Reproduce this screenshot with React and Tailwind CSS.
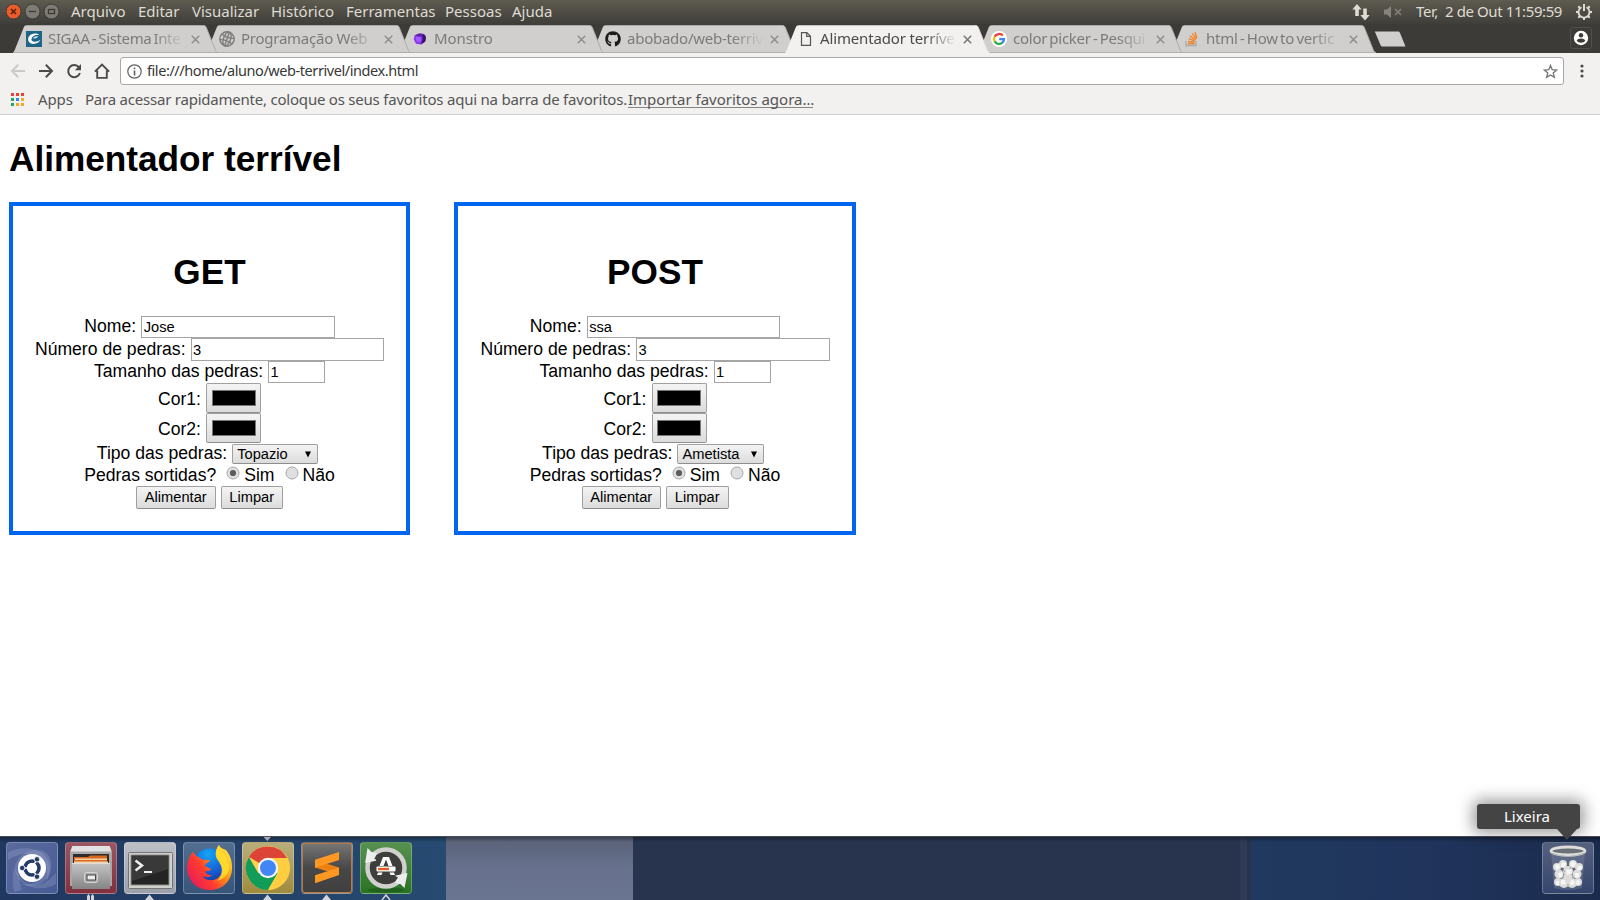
import React from "react";
import { FaGithub } from "react-icons/fa";

const menus = [
  ["Arquivo", "w-[55px]"],
  ["Editar", "w-[42px]"],
  ["Visualizar", "w-[67px]"],
  ["Histórico", "w-[63px]"],
  ["Ferramentas", "w-[87px]"],
  ["Pessoas", "w-[55px]"],
  ["Ajuda", "w-[40px]"],
];

const SigaaIcon = () => (
  <svg width="16" height="16" viewBox="0 0 16 16">
    <rect width="16" height="16" fill="#1f6587" />
    <path d="M13.500 4.200C11 1.600 5 2.200 2.800 5.800 .8 9.400 3.400 12.900 7.300 12.900c3.300 0 6.300-1.600 7.200-4.300-2 1.900-5 2.600-7 2C4.900 9.700 4.900 7.300 7 5.400 8.800 3.900 11.300 3.600 13.500 4.200z" fill="#fff" />
    <path d="M7.500 6.200c1.500-1.200 3.500-1.200 4.700-.7-.8 1.300-2.700 2.300-4.700 2.300z" fill="#b9dcec" />
  </svg>
);
const GlobeIcon = () => (
  <svg width="16" height="16" viewBox="0 0 16 16" fill="none" stroke="#7c7c7c" strokeWidth="1.400">
    <circle cx="8" cy="8" r="7.200" />
    <g transform="rotate(20 8 8)">
      <ellipse cx="8" cy="8" rx="3.500" ry="7.200" />
      <path d="M8 .8v14.400M1.500 5q6.500 2.600 13 0M1.500 11q6.500-2.600 13 0" />
    </g>
  </svg>
);
const MonsterIcon = () => (
  <svg width="16" height="16" viewBox="0 0 16 16">
    <path d="M2.500 4.500 7 2.500l5 .5 2 3-.8 4.500L9 13.500l-5-.8L1.800 8.500z" fill="#8a35ee" />
    <path d="m10 3 3 1 1 3-.8 3.500L9 13.500l1.500-5z" fill="#3a1360" />
    <path d="m2.500 4.500 4.500-2 5 .5-2.500 2.500z" fill="#5a20a0" />
    <path d="m3.500 6 5 .3.500 4-4 .7z" fill="#a35bff" />
  </svg>
);
const GithubIcon = () => <FaGithub size={16} color="#1b1b1b" />;
const PageIcon = () => (
  <svg width="16" height="16" viewBox="0 0 16 16" fill="none" stroke="#555" strokeWidth="1.200">
    <path d="M3.500 1.600h5.400l3.600 3.600v9.200h-9zM8.700 1.800v3.600h3.700" />
  </svg>
);
const GoogleIcon = () => (
  <svg width="16" height="16" viewBox="0 0 16 16">
    <circle cx="8" cy="8" r="8" fill="#fff" />
    <g fill="none" strokeWidth="2.300">
      <path d="M11.800 4.600A5 5 0 0 0 3.600 5.800" stroke="#ea4335" />
      <path d="M3.600 5.700a5 5 0 0 0 0 4.600" stroke="#fbbc05" />
      <path d="M3.600 10.200a5 5 0 0 0 7.700 1.500" stroke="#34a853" />
      <path d="M11.200 11.800A5 5 0 0 0 13 8.100H8.200" stroke="#4285f4" />
    </g>
  </svg>
);
const StackIcon = () => (
  <svg width="16" height="16" viewBox="0 0 16 16" fill="none" strokeWidth="1.300">
    <path d="M2 10v4.500h10V10" stroke="#a9a9ab" />
    <path d="M4 12.500h6.500M4 10.300l6.500.8M4.700 7.700l6.200 2.100M6 5.100l5.500 3.600M8.300 2.700l4 5.200M11 1l1.800 6" stroke="#f48024" />
  </svg>
);

const tabs = [
  { t: "SIGAA - Sistema Inte", Icon: SigaaIcon, k: "tracking-[-0.350px] [word-spacing:-1.500px]" },
  { t: "Programação Web", Icon: GlobeIcon, k: "tracking-[-0.250px]" },
  { t: "Monstro", Icon: MonsterIcon, k: "tracking-[-0.100px]" },
  { t: "abobado/web-terriv", Icon: GithubIcon, k: "tracking-[-0.250px]" },
  { t: "Alimentador terríve", Icon: PageIcon, k: "tracking-[-0.150px]", active: true },
  { t: "color picker - Pesqui", Icon: GoogleIcon, k: "tracking-[-0.250px] [word-spacing:-1.500px]" },
  { t: "html - How to vertic", Icon: StackIcon, k: "tracking-[-0.200px] [word-spacing:-1.500px]" },
];
const layers = ["z-[7]", "z-[6]", "z-[5]", "z-[4]", "z-[8]", "z-[2]", "z-[1]"];

function Tab({ t, Icon, k, active, layer }) {
  return (
    <div className={`relative -ml-3 h-7 w-[205px] shrink-0 ${layer}`}>
      <svg className="absolute inset-0" width="205" height="28" viewBox="0 0 205 28">
        <path d="M0 28 1.500 25.500 10.500 3C11.200 1 12 .3 14 .3h176c2 0 2.800.7 3.500 2.700l9 22.500L205 28z" fill={active ? "#f2f1f0" : "#d0cfcd"} />
        <path d="M190 .5c2 0 2.800.7 3.500 2.500l9 22.500 1.500 2" fill="none" stroke={active ? "#dddcdb" : "#aeadab"} />
        {!active && <path d="M0 27.500h205" stroke="#b0afad" />}
      </svg>
      <div className="relative flex h-7 items-center pl-[13px]">
        <Icon />
        <div className={`-mt-[2px] ml-[6px] w-[140px] whitespace-nowrap text-[15px] leading-[26px] [mask-image:linear-gradient(to_right,black_105px,transparent_137px)] ${k} ${active ? "text-[#4a4a4a]" : "text-[#7b7b7a]"}`}>{t}</div>
        <svg className="ml-[3px]" width="9" height="9" viewBox="0 0 9 9">
          <path d="m.8.8 7.400 7.400m0-7.400L.8 8.200" stroke={active ? "#777" : "#8f8e8d"} strokeWidth="1.500" />
        </svg>
      </div>
    </div>
  );
}

function TopBar() {
  return (
    <div className="flex h-6 items-center bg-linear-to-b from-[#5e5b50] to-[#3f3e39] pl-[6px] text-[15px] leading-[22px] text-[#dfdbd2]">
      <svg width="54" height="24" viewBox="0 0 54 24">
        <circle cx="7.500" cy="11.500" r="7.500" fill="#ec5b29" stroke="#3d3b36" />
        <path d="m5 9 5 5m0-5-5 5" stroke="#50200e" strokeWidth="1.500" />
        <circle cx="26.500" cy="11.500" r="7.500" fill="#7d7b74" stroke="#3d3b36" />
        <path d="M23 11.500h7" stroke="#3c3b37" strokeWidth="1.300" />
        <circle cx="45.500" cy="11.500" r="7.500" fill="#7d7b74" stroke="#3d3b36" />
        <rect x="42.500" y="9.500" width="6" height="4" fill="none" stroke="#3c3b37" strokeWidth="1.300" />
      </svg>
      <div className="-mt-[2px] ml-[11px] flex gap-3">
        {menus.map(([m, w]) => <div key={m} className={`whitespace-nowrap ${w}`}>{m}</div>)}
      </div>
      <svg className="ml-auto" width="18" height="18" viewBox="0 0 18 18" fill="#dfdbd2">
        <path d="M5 1 .3 6.500h2.900V13h3.600V6.500h2.900zM13 17.500 8.300 12h2.900V5.500h3.600V12h2.900z" />
      </svg>
      <svg className="ml-[14px]" width="18" height="14" viewBox="0 0 18 14">
        <path d="M0 4.500h3L7 1v12L3 9.500H0z" fill="#85837b" />
        <path d="m11 4 6 6m0-6-6 6" stroke="#85837b" strokeWidth="1.500" />
      </svg>
      <div className="-mt-[2px] ml-[14px] w-[147px] whitespace-pre tracking-[-0.400px]">Ter,  2 de Out 11:59:59</div>
      <svg className="mr-[7px] ml-3" width="18" height="18" viewBox="0 0 18 18" fill="none" stroke="#dfdbd2">
        <path d="M6.500 4.200a5.500 5.500 0 1 0 5 0" strokeWidth="1.800" />
        <path d="M9 1v7" strokeWidth="2" />
        <path d="M1 9h2.500M14.500 9H17M3.300 3.300 5 5M14.700 3.300 13 5M3.300 14.700 5 13M14.700 14.700 13 13M9 14.500V17" strokeWidth="2" />
      </svg>
    </div>
  );
}

function TabStrip() {
  return (
    <div className="flex h-[29px] items-end bg-[#3c3b37] pl-[25px]">
      <div className="isolate flex h-7">
        {tabs.map((t, i) => <Tab key={t.t} {...t} layer={layers[i]} />)}
      </div>
      <svg className="-ml-[2px] self-center" width="33" height="16" viewBox="0 0 33 16">
        <path d="M1 .5h23c1 0 1.500.3 2 1.500l5.500 13.500H9c-1.500 0-2-.3-2.500-1.500L1 1z" fill="#d0cfcd" />
      </svg>
      <div className="mr-2 mb-1 ml-auto flex size-[22px] items-center justify-center rounded-[3px] border border-[#504f4a]">
        <svg width="16" height="16" viewBox="0 0 16 16">
          <circle cx="8" cy="8" r="7.200" fill="#fff" />
          <circle cx="8" cy="5.300" r="2.200" fill="#3c3b37" />
          <path d="M3.700 10.500c1-2.700 7.600-2.700 8.600 0-1.800 3-6.800 3-8.600 0z" fill="#3c3b37" />
        </svg>
      </div>
    </div>
  );
}

function Toolbar() {
  return (
    <div className="h-[62px] border-b border-[#cfcecd] bg-[#f2f1f0]">
      <div className="flex h-[36px] items-center pl-[10px]">
        <svg width="16" height="16" viewBox="0 0 16 16" fill="none" stroke="#cbcac9" strokeWidth="2"><path d="M15 8H2.500M8.200 1.700 2 8l6.200 6.300" /></svg>
        <svg className="ml-3" width="16" height="16" viewBox="0 0 16 16" fill="none" stroke="#4a4a4a" strokeWidth="2"><path d="M1 8h12.500M7.800 1.700 14 8l-6.200 6.300" /></svg>
        <svg className="ml-3" width="16" height="16" viewBox="0 0 16 16"><path d="M13 4.500A6 6 0 1 0 13.900 10" fill="none" stroke="#4a4a4a" strokeWidth="2" /><path d="M15 1v6.200H8.800z" fill="#4a4a4a" /></svg>
        <svg className="ml-3" width="16" height="16" viewBox="0 0 16 16" fill="none" stroke="#4a4a4a" strokeWidth="1.900"><path d="M.9 8.700 8 1.600l7.100 7.100M3.200 7.500v7.400h9.600V7.500" /></svg>
        <div className="ml-[10px] flex h-7 w-[1444px] items-center rounded-[3px] border border-[#a9a8a7] bg-white pl-[6px]">
          <svg width="15" height="15" viewBox="0 0 15 15" fill="none" stroke="#606060"><circle cx="7.500" cy="7.500" r="6.700" strokeWidth="1.200" /><path d="M7.500 3.500v1.700M7.500 6.500v5" strokeWidth="1.600" /></svg>
          <div className="-mt-[2px] ml-[5px] w-[280px] whitespace-nowrap text-[14.500px] leading-6 tracking-[-0.430px] text-[#383838]">file:///home/aluno/web-terrivel/index.html</div>
          <svg className="mr-[5px] ml-auto" width="15" height="15" viewBox="0 0 15 15" fill="none" stroke="#737373" strokeWidth="1.300"><path d="m7.500 1.500 1.700 4.200 4.500.3-3.500 2.900 1.200 4.500-3.900-2.500-3.900 2.500 1.200-4.500L1.300 6l4.500-.3z" /></svg>
        </div>
        <svg className="ml-[16px]" width="4" height="14" viewBox="0 0 4 14" fill="#4a4a4a"><circle cx="2" cy="2" r="1.600" /><circle cx="2" cy="7" r="1.600" /><circle cx="2" cy="12" r="1.600" /></svg>
      </div>
      <div className="flex h-[21px] items-center pl-[11px] text-[15px] leading-6 text-[#555]">
        <svg width="13" height="13" viewBox="0 0 13 13">
          <path d="M0 0h3v3H0zM5 0h3v3H5zM10 0h3v3h-3z" fill="#ea4335" />
          <path d="M0 5h3v3H0zM0 10h3v3H0z" fill="#22a463" />
          <path d="M5 5h3v3H5z" fill="#2f86ee" />
          <path d="M10 5h3v3h-3zM5 10h3v3H5zM10 10h3v3h-3z" fill="#f9a825" />
        </svg>
        <div className="-mt-px ml-[14px] w-[47px] tracking-[-0.100px]">Apps</div>
        <div className="-mt-px w-[543px] whitespace-nowrap tracking-[-0.220px]">Para acessar rapidamente, coloque os seus favoritos aqui na barra de favoritos.</div>
        <div className="h-[17px] w-[185px] border-b border-[#858585] leading-[16px] whitespace-nowrap">Importar favoritos agora…</div>
      </div>
    </div>
  );
}

const btn = "border border-[#a0a0a0] border-b-[#8e8e8e] rounded-[2px] bg-linear-to-b from-[#f4f4f4] to-[#dcdcdc]";

function Radio({ on }) {
  return (
    <svg width="14" height="14" viewBox="0 0 14 14">
      <circle cx="7" cy="7" r="6" fill="#e0e0e0" stroke="#a8a8a8" />
      {on && <circle cx="7" cy="7" r="3.100" fill="#5c5c5c" />}
    </svg>
  );
}

function Field({ label, value, box }) {
  return (
    <>
      <span>{label}</span>
      <div className={`ml-[5px] border border-[#a5a5a5] bg-white pl-[1.500px] text-[14.670px] ${box}`}>{value}</div>
    </>
  );
}

function Card({ title, name, stone, width, selectW }) {
  return (
    <section className={`h-[333px] border-4 border-[#0066ee] pt-[45px] text-[17.600px] text-black ${width}`}>
      <h2 className="h-[65px] text-center text-[35.200px] leading-[42px] font-bold">{title}</h2>
      <div className="flex h-[22px] justify-center leading-[20px]"><Field label="Nome:" value={name} box="h-[22px] w-[193.500px] leading-[21px]" /></div>
      <div className="flex h-[23px] justify-center leading-[22px]"><Field label="Número de pedras:" value="3" box="h-[23px] w-[193.500px] leading-[22px]" /></div>
      <div className="flex h-[22px] justify-center leading-[20px]"><Field label="Tamanho das pedras:" value="1" box="h-[22px] w-[57px] leading-[21px]" /></div>
      {["Cor1:", "Cor2:"].map((c) => (
        <div key={c} className="flex h-[30px] justify-center leading-[32px]">
          <span>{c}</span>
          <div className={`ml-[5px] flex h-[30px] w-[55px] items-center justify-center ${btn}`}>
            <div className="h-4 w-11 border border-[#777] bg-black" />
          </div>
        </div>
      ))}
      <div className="flex h-[22px] justify-center pr-1 leading-[21px]">
        <span>Tipo das pedras:</span>
        <div className={`mt-px ml-[5px] flex h-5 items-center justify-between pr-[5px] pl-[4px] text-[14.670px] leading-[18px] ${selectW} ${btn}`}>
          <span>{stone}</span>
          <svg width="8" height="7" viewBox="0 0 8 7"><path d="M1 .5h6L4 6.500z" fill="#000" /></svg>
        </div>
      </div>
      <div className="flex h-[21px] justify-center leading-[21px]">
        <span>Pedras sortidas?</span>
        <span className="mt-px ml-[10px]"><Radio on /></span>
        <span className="ml-[4px]">Sim</span>
        <span className="mt-px ml-[10px]"><Radio /></span>
        <span className="ml-[4px]">Não</span>
      </div>
      <div className="flex justify-center gap-[5px] text-center text-[14.670px] leading-[21px]">
        <div className={`h-[23px] w-[79.500px] ${btn}`}>Alimentar</div>
        <div className={`h-[23px] w-[62.500px] ${btn}`}>Limpar</div>
      </div>
    </section>
  );
}

const Tile = ({ tone, children }) => (
  <div className={`relative size-[52px] overflow-hidden rounded-[4px] border border-white/25 ${tone}`}>
    <svg className="absolute -top-px -left-px" width="52" height="52" viewBox="0 0 52 52">{children}</svg>
  </div>
);

function Dock() {
  return (
    <footer className="relative flex h-16 shrink-0 border-t border-[#474c58] bg-[#25456d]">
      <div className="flex w-[446px] gap-[7px] bg-linear-to-r from-[#20375f] to-[#264a70] pt-[5px] pl-[6px]">
        <Tile tone="bg-linear-to-br from-[#5a6a9c] to-[#475c96]">
          <g fill="#b4c0e0" fillOpacity=".22">
            <path d="M8 50C4 28 10 9 30 8 46 8 50 24 40 40 44 24 38 14 27 14 14 14 10 28 16 48z" />
            <path d="M2 10C20 2 42 6 44 26c0 14-14 22-30 16 14 2 24-4 24-16C38 14 22 6 2 18z" />
            <path d="M50 42C34 52 10 44 9 26c4 12 12 18 22 17 8-1 14-6 19-12z" />
          </g>
          <circle cx="26" cy="26" r="14" fill="#fff" />
          <circle cx="26" cy="26" r="7" fill="none" stroke="#243a68" strokeWidth="3.600" />
          <g stroke="#fff" strokeWidth="1.500"><path d="m26 26 5-9M26 26H15M26 26l5 9" /></g>
          <circle cx="26" cy="26" r="4.800" fill="#fff" />
          <g fill="#243a68" stroke="#fff" strokeWidth=".8"><circle cx="16.200" cy="26" r="2.700" /><circle cx="31" cy="17.300" r="2.700" /><circle cx="31" cy="34.700" r="2.700" /></g>
        </Tile>
        <Tile tone="bg-linear-to-b from-[#9a5663] to-[#82303e]">
          <defs><linearGradient id="cab" x1="0" y1="0" x2="0" y2="1"><stop stopColor="#c2c2c2" /><stop offset="1" stopColor="#858585" /></linearGradient></defs>
          <path d="M7 5q0-1 1-1h36q1 0 1 1l2 5v34H5V10z" fill="#a8a8a8" />
          <path d="M7 5q0-1 1-1h36q1 0 1 1l1.500 4.500h-41z" fill="#e2e2e2" />
          <rect x="8" y="12" width="36" height="10" fill="#2d2d2d" />
          <path d="M9 15h14l2-1.500h17V22H9z" fill="#d7681e" />
          <path d="M10 16.500h32v1.500H10zM9 19.500h34V22H9z" fill="#f7d2a6" />
          <path d="M7 22h38v25H7z" fill="url(#cab)" /><path d="M7 21.500h38" stroke="#ddd" />
          <rect x="19.500" y="30.500" width="13" height="10" rx="2" fill="#aaa" stroke="#d4d4d4" />
          <rect x="22" y="33" width="8.500" height="5" fill="#ededed" stroke="#444" />
        </Tile>
        <Tile tone="bg-linear-to-b from-[#bdc0c5] to-[#9ba0aa]">
          <rect x="4.500" y="10.500" width="44" height="36" rx="1" fill="#d0d0cd" stroke="#747474" />
          <rect x="7" y="13" width="38" height="30" fill="#242424" stroke="#8b8b8b" />
          <path d="M8 14h36v13L8 39z" fill="#777" opacity=".25" />
          <path d="m11.500 18.500 6.500 5-6.500 5" fill="none" stroke="#eee" strokeWidth="2.500" /><path d="M20 30h8" stroke="#eee" strokeWidth="2" />
        </Tile>
        <Tile tone="bg-linear-to-b from-[#526f91] to-[#39557a]">
          <defs>
            <linearGradient id="fx" x1="0" y1=".8" x2="1" y2=".1"><stop stopColor="#e5185d" /><stop offset=".35" stopColor="#ff3b30" /><stop offset=".65" stopColor="#ff9a15" /><stop offset="1" stopColor="#fff14a" /></linearGradient>
            <radialGradient id="sea" cx=".45" cy=".15" r=".9"><stop stopColor="#13a6f7" /><stop offset=".6" stopColor="#1557cf" /><stop offset="1" stopColor="#142f80" /></radialGradient>
          </defs>
          <circle cx="27" cy="25" r="18.500" fill="url(#sea)" />
          <path d="M10 10c-4 4-6 10-6 17 1 13 11 21 23 21 13 0 22-10 22-22 0-8-2-13-6-18-5-2-6-3-7-5-5 6-3 12 0 16 4 6 4 12 0 16-5 5-13 4-17-1 4 2 8 1 11-1-4 1-6-1-8-3 2-2 5 0 6-3l-6-3c0-3 4-3 5-6-5 0-9 0-11-3-2 0-4-2-6-5z" fill="url(#fx)" />
          <path d="M36 3c-5 7-4 12 0 17 5 7 3 15-2 19 9-3 13-9 12-17C45 13 37 10 36 3z" fill="#ffdf2e" opacity=".85" />
        </Tile>
        <Tile tone="bg-linear-to-b from-[#b8ae7c] to-[#a08b3d]">
          <circle cx="26" cy="26" r="22" fill="#ffd24d" />
          <path d="M26 26 6.900 15A22 22 0 0 1 45 16H26z" fill="#db4437" />
          <path d="M6.900 15A22 22 0 0 0 26 48l9.500-16.500L26 26 16.500 31.500z" fill="#129c59" />
          <path d="M26 48A22 22 0 0 0 45 16H26l9.500 15.500z" fill="#ffcd40" />
          <circle cx="26" cy="26" r="10.200" fill="#f5f5f5" /><circle cx="26" cy="26" r="8" fill="#4285f4" />
        </Tile>
        <Tile tone="bg-linear-to-b from-[#777777] via-[#484848] to-[#3f3f3f]">
          <rect x="1" y="1" width="50" height="50" rx="3" fill="none" stroke="#b97a45" strokeWidth="2" />
          <path d="m14 18 24 7.500V33L14 25.500z" fill="#ec8113" />
          <path d="m38 10-24 7.700v8L38 18zM38 25.500l-24 7.700v8L38 33z" fill="#ff9822" />
        </Tile>
        <Tile tone="bg-linear-to-b from-[#579150] to-[#287323]">
          <ellipse cx="26" cy="48" rx="18" ry="2.500" fill="#174f16" opacity=".5" />
          <circle cx="26" cy="26" r="18.500" fill="#3e3e3c" stroke="#d0d0ce" strokeWidth="4.500" />
          <path d="M6 20 8 7.500l3 3 5 1.500-3 6 3 0zM46.500 32 44 44.500l-3-3-5-1.500 3-5-2-1z" fill="#ededed" stroke="#ededed" strokeWidth="1.500" />
          <path d="M23 15h6l3.500 9h-4L26 17.500 23.500 24h-4z" fill="#fff" />
          <rect x="16.500" y="24.500" width="19" height="5" rx="1" fill="#fff" /><rect x="18" y="25.800" width="11" height="2.400" fill="#e65c1e" />
          <path d="M18 30.500h4.500L21.500 33H17zM29.500 30.500H34l1 2.500h-4.500z" fill="#fff" />
        </Tile>
      </div>
      <div className="w-[187px] bg-linear-to-b from-[#596177] via-[#67718d] to-[#6a7592]" />
      <div className="w-[607px] bg-[#28344e]" />
      <div className="w-[7px] bg-[#2f3a57]" />
      <div className="w-[4px] bg-[#28344e]" />
      <div className="flex grow justify-end bg-linear-to-r from-[#20395f] via-[#20345c] to-[#1b2b4d] pt-[5px] pr-[6px]">
        <Tile tone="bg-linear-to-b from-[#56617f] to-[#34456d]">
          <path d="M9 10h34l-3 36q-14 4-28 0z" fill="#8d97a8" opacity=".3" />
          <g fill="#dcddda">
            <circle cx="15" cy="25" r="4" /><circle cx="21" cy="22" r="4" /><circle cx="31" cy="22" r="4" /><circle cx="37" cy="25" r="4" />
            <circle cx="17" cy="32" r="4.500" /><circle cx="26" cy="29" r="5" /><circle cx="35" cy="32" r="4.500" />
            <circle cx="16" cy="40" r="4" /><circle cx="22" cy="41" r="5" /><circle cx="30" cy="41" r="5" /><circle cx="36" cy="40" r="4" /><circle cx="26" cy="36" r="5" />
          </g>
          <g fill="#f6f6f4">
            <path d="m13 23 4-1 1 4-4 2zM20 20l4 1-1 4-4 0zM30 19l4 2-2 4-4-1zM36 24l4 0-1 4-4 0zM16 31l4-1 1 4-4 2zM24 28l5-1 1 4-5 2zM33 31l4 0 0 4-4 1zM19 38l4 0 1 4-5 1zM29 38l4 1-1 4-4 0zM14 39l3 0 0 4-3 0zM35 38l3 1-1 4-3-1z" />
          </g>
          <path d="m21 27 2 3M29 25l-1 2M32 35l-2 1M22 35l-2 1M26 42v3" stroke="#a9aba9" strokeWidth="1.200" />
          <ellipse cx="26" cy="9" rx="17" ry="4" fill="#6b7077" stroke="#dededc" strokeWidth="2.800" />
          <path d="M9 11q17 7 34 0" fill="none" stroke="#aeb0ae" />
        </Tile>
      </div>
      <div className="absolute inset-x-0 top-0 h-[5px] bg-linear-to-b from-black/35 to-transparent" />
      <svg className="absolute top-0 left-0" width="446" height="63" viewBox="0 0 446 63" fill="#d2d4d8">
        <path d="M263.500 0h7.500l-3.700 4z" fill="#a5a9b0" />
        <path d="M87 63v-4l1.500-2 1.500 2v4zM91 63v-4l1.500-2 1.500 2v4zM145 63l4.500-5.500L154 63zM263 63l4.500-5.500L272 63zM322 63l4.500-5.500L331 63z" />
        <path d="m382 63 4-5 4 5" fill="none" stroke="#d2d4d8" strokeWidth="1.500" />
      </svg>
    </footer>
  );
}

export default function App() {
  return (
    <div className="relative flex h-[900px] w-[1600px] flex-col overflow-hidden bg-white font-['Noto_Sans',sans-serif]">
      <TopBar />
      <TabStrip />
      <Toolbar />
      <main className="grow pl-[9px] font-['Liberation_Sans',Arial,sans-serif]">
        <h1 className="mt-[23px] h-[64px] text-[35.200px] leading-[42px] font-bold text-black">Alimentador terrível</h1>
        <div className="flex gap-[44px]">
          <Card title="GET" name="Jose" stone="Topazio" width="w-[401px]" selectW="w-[86px]" />
          <Card title="POST" name="ssa" stone="Ametista" width="w-[402px]" selectW="w-[86.500px]" />
        </div>
      </main>
      <Dock />
      <div className="absolute top-[804px] left-[1477px] h-[25px] w-[103px] rounded-[3px] bg-[#444] pr-[3px] text-center text-[15px] leading-[25px] text-white shadow-[0_0_16px_4px_rgba(0,0,0,0.4)]">
        Lixeira
        <svg className="absolute top-[25px] left-[80px]" width="20" height="11" viewBox="0 0 20 11"><path d="M0 0h20L10 11z" fill="#444" /></svg>
      </div>
    </div>
  );
}
